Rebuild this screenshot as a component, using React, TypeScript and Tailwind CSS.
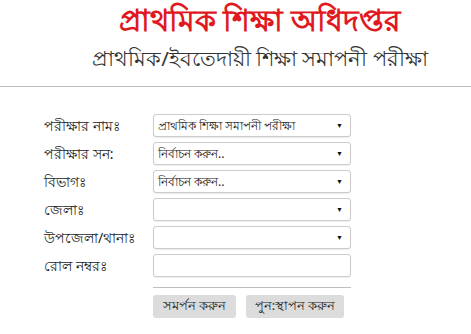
import React from 'react';

const font = { fontFamily: '"Noto Sans", "Liberation Sans", sans-serif' };

const rows: { label: string; value: string | null; select: boolean }[] = [
  { label: 'পরীক্ষার নামঃ', value: 'প্রাথমিক শিক্ষা সমাপনী পরীক্ষা', select: true },
  { label: 'পরীক্ষার সন:', value: 'নির্বাচন করুন..', select: true },
  { label: 'বিভাগঃ', value: 'নির্বাচন করুন..', select: true },
  { label: 'জেলাঃ', value: '', select: true },
  { label: 'উপজেলা/থানাঃ', value: '', select: true },
  { label: 'রোল নম্বরঃ', value: null, select: false },
];

const Field: React.FC<{ value: string | null; select: boolean }> = ({ value, select }) => (
  <div className="flex h-[23px] w-[198px] items-center justify-between rounded-[3px] border border-[#cccccc] bg-white pl-[4px] pr-[7px] shadow-[0_1px_1px_rgba(0,0,0,0.08)]">
    <span className="text-[12px] leading-none text-[#222]">{value}</span>
    {select && <span className="text-[7px] leading-none text-[#111]">▼</span>}
  </div>
);

export default function App() {
  return (
    <div className="h-[334px] w-[471px] bg-white" style={font}>
      <div className="flex flex-col items-center pt-[4px]">
        <h1 className="ml-[49px] text-[29.5px] font-bold leading-[32px] text-[#e0191f]">প্রাথমিক শিক্ষা অধিদপ্তর</h1>
        <h2 className="ml-[49px] mt-[10px] text-[20.5px] leading-[24px] text-[#333]">প্রাথমিক/ইবতেদায়ী শিক্ষা সমাপনী পরীক্ষা</h2>
      </div>
      <div className="mt-[16px] h-px bg-[#bdbdbd]" />

      <div className="mt-[27px] flex flex-col gap-[5px] pl-[44px]">
        {rows.map((r) => (
          <div key={r.label} className="flex items-center">
            <span className="w-[109px] text-[14px] text-[#222]">{r.label}</span>
            <Field value={r.value} select={r.select} />
          </div>
        ))}
      </div>

      <div className="ml-[153px] mt-[10px] h-px w-[198px] bg-[#bdbdbd]" />
      <div className="ml-[153px] mt-[7px] flex gap-[10px]">
        <button className="h-[23px] w-[83px] rounded-[3px] bg-[#dcdcdc] text-[12.5px] text-[#222]">সমর্পন করুন</button>
        <button className="h-[23px] w-[98px] rounded-[3px] bg-[#dcdcdc] text-[12.5px] text-[#222]">পুন:স্থাপন করুন</button>
      </div>
    </div>
  );
}
